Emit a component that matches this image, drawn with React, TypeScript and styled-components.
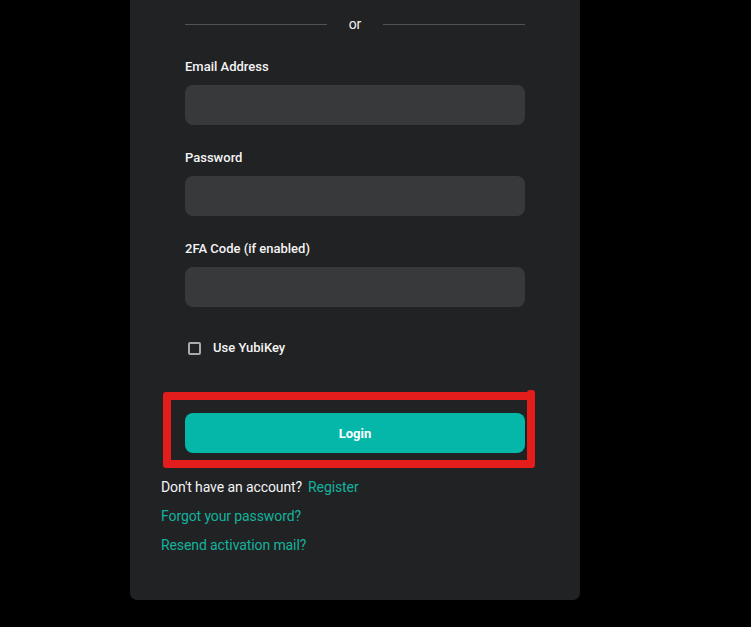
import { createGlobalStyle, styled } from 'styled-components';

const GlobalStyle = createGlobalStyle`
  html, body {
    margin: 0;
    padding: 0;
    background: #000;
    font-family: Roboto, 'Liberation Sans', sans-serif;
  }
`;

const Page = styled.div`
  width: 751px;
  height: 627px;
  overflow: hidden;
  background: #000;
  display: flex;
  justify-content: flex-start;
  padding-left: 130px;
  box-sizing: border-box;
`;

const Card = styled.section`
  position: relative;
  width: 450px;
  height: 600px;
  background: #212224;
  border-radius: 0 0 7px 7px;
  box-sizing: border-box;
  padding: 14px 55px 0;
`;

const Divider = styled.div`
  display: flex;
  align-items: center;
  gap: 20px;
  height: 20px;
  margin-bottom: 24px;
  color: #f2f2f2;
  font-size: 14px;
  &::before,
  &::after {
    content: '';
    flex: 1;
    height: 1px;
    background: #505153;
  }
  span {
    width: 16px;
    text-align: center;
  }
`;

const Field = styled.div`
  display: flex;
  flex-direction: column;
  margin-bottom: 24px;
`;

const Label = styled.label`
  font-size: 13px;
  font-weight: 500;
  color: #f4f4f4;
  line-height: 18px;
  margin-bottom: 9px;
`;

const Input = styled.input`
  height: 40px;
  border: none;
  border-radius: 8px;
  background: #38393b;
  outline: none;
  padding: 0 12px;
  color: #fff;
  font-size: 14px;
`;

const CheckRow = styled.label`
  display: flex;
  align-items: center;
  gap: 12px;
  margin: 33px 0 0 3px;
  font-size: 13px;
  font-weight: 500;
  color: #f4f4f4;
  line-height: 16px;
`;

const CheckBox = styled.span`
  width: 9px;
  height: 9px;
  border: 2px solid #a9aaab;
  border-radius: 2px;
`;

const LoginButton = styled.button`
  display: block;
  width: 100%;
  height: 40px;
  margin-top: 57px;
  border: none;
  border-radius: 8px;
  background: #04b7a9;
  color: #fff;
  font-family: Roboto, 'Liberation Sans', sans-serif;
  font-size: 13px;
  font-weight: 700;
`;

const Links = styled.div`
  display: flex;
  flex-direction: column;
  gap: 11px;
  margin: 25px 0 0 -24px;
  font-size: 14px;
  line-height: 18px;
  color: #f4f4f4;
  letter-spacing: -0.1px;
`;

const LinkText = styled.a<{ $inline?: boolean }>`
  color: #13b29d;
  text-decoration: none;
  margin-left: ${({ $inline }) => ($inline ? '6px' : '0')};
`;

const Highlight = styled.div`
  position: absolute;
  left: 33px;
  top: 392px;
  width: 372px;
  height: 76px;
  border: 8px solid #e31c1c;
  border-radius: 3px;
  box-sizing: border-box;
  &::after {
    content: '';
    position: absolute;
    right: -8px;
    top: -10px;
    width: 8px;
    height: 14px;
    background: #e31c1c;
    border-radius: 3px 3px 0 0;
  }
`;

const App = () => {
  return (
    <>
      <GlobalStyle />
      <Page>
        <Card>
          <Divider>
            <span>or</span>
          </Divider>
          <Field>
            <Label>Email Address</Label>
            <Input type='email' />
          </Field>
          <Field>
            <Label>Password</Label>
            <Input type='password' />
          </Field>
          <Field>
            <Label>2FA Code (if enabled)</Label>
            <Input type='text' />
          </Field>
          <CheckRow>
            <CheckBox />
            Use YubiKey
          </CheckRow>
          <LoginButton>Login</LoginButton>
          <Links>
            <div>
              Don&apos;t have an account?
              <LinkText $inline href='#'>
                Register
              </LinkText>
            </div>
            <LinkText href='#'>Forgot your password?</LinkText>
            <LinkText href='#'>Resend activation mail?</LinkText>
          </Links>
          <Highlight />
        </Card>
      </Page>
    </>
  );
};

export default App;
